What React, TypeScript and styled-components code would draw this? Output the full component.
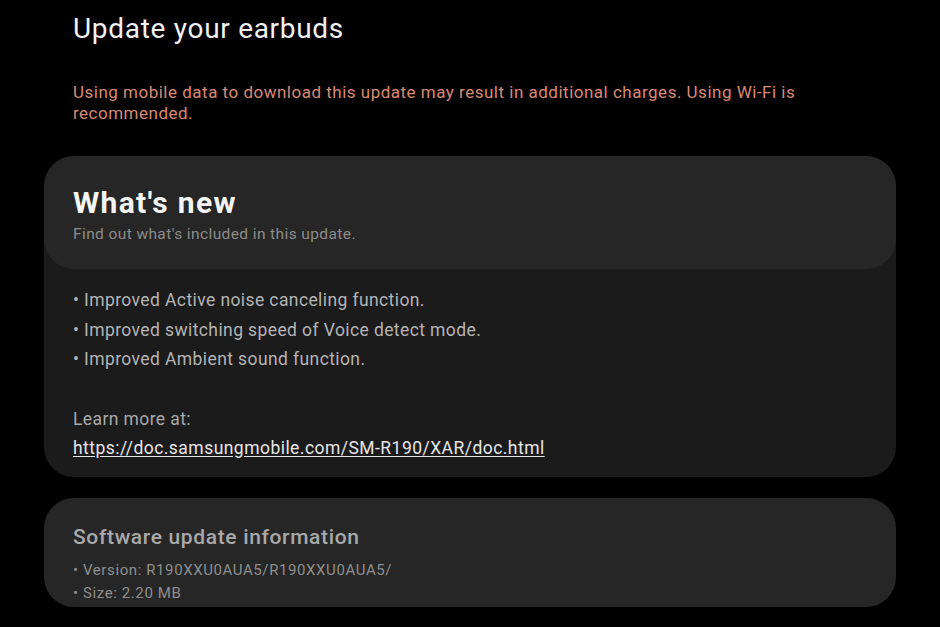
import React from "react";
import styled, { createGlobalStyle } from "styled-components";

const Global = createGlobalStyle`
  html, body { margin: 0; padding: 0; background: #000; }
  body { font-family: Roboto, "Noto Sans", sans-serif; -webkit-font-smoothing: antialiased; }
`;

const Page = styled.div`
  width: 940px;
  height: 627px;
  overflow: hidden;
  background: #000;
  box-sizing: border-box;
  padding: 0 44px;
  display: flex;
  flex-direction: column;
`;

const Title = styled.h1`
  margin: 12px 0 0 29px;
  font-size: 28px;
  line-height: 34px;
  font-weight: 400;
  letter-spacing: 0.7px;
  color: #f2f2f2;
`;

const Warning = styled.p`
  margin: 36px 0 0 29px;
  font-size: 17px;
  line-height: 21px;
  letter-spacing: 0.5px;
  color: #d88a74;
  max-width: 760px;
`;

const Card = styled.section<{ $bg: string }>`
  background: ${(p) => p.$bg};
  border-radius: 30px;
  overflow: hidden;
`;

const NewsCard = styled(Card)`
  margin-top: 32px;
  height: 321px;
`;

const NewsHeader = styled.div`
  background: #262626;
  border-radius: 30px;
  height: 113px;
  box-sizing: border-box;
  padding: 27px 29px 0;
`;

const Heading = styled.h2`
  margin: 0;
  font-size: 30px;
  line-height: 40px;
  font-weight: 700;
  letter-spacing: 1.3px;
  color: #f4f4f4;
`;

const SubText = styled.div`
  margin-top: 2px;
  font-size: 15.5px;
  line-height: 19px;
  letter-spacing: 0.4px;
  color: #8c8c8c;
`;

const NewsBody = styled.div`
  padding: 17px 29px 0;
  color: #b4b4b4;
  font-size: 17.5px;
  letter-spacing: 0.4px;
`;

const Bullet = styled.div`
  line-height: 29.5px;
`;

const LearnMore = styled.div`
  margin-top: 30px;
  line-height: 29px;
  color: #a8a8a8;
`;

const Link = styled.a`
  display: block;
  line-height: 29px;
  letter-spacing: 0.46px;
  color: #e6e6e6;
  text-decoration: underline;
  text-underline-offset: 2px;
`;

const InfoCard = styled(Card)`
  margin-top: 21px;
  height: 109px;
  box-sizing: border-box;
  padding: 24px 29px 0;
`;

const InfoTitle = styled.h3`
  margin: 0;
  font-size: 21px;
  line-height: 30px;
  font-weight: 500;
  letter-spacing: 0.65px;
  color: #a9a9a9;
`;

const InfoLine = styled.div`
  font-size: 15px;
  line-height: 23px;
  letter-spacing: 0.6px;
  color: #8e8e8e;
`;

const InfoLines = styled.div`
  margin-top: 7px;
`;

export default function App() {
  return (
    <>
      <Global />
      <Page>
        <Title>Update your earbuds</Title>
        <Warning>
          Using mobile data to download this update may result in additional charges. Using Wi-Fi is
          recommended.
        </Warning>
        <NewsCard $bg="#1b1b1b">
          <NewsHeader>
            <Heading>What's new</Heading>
            <SubText>Find out what's included in this update.</SubText>
          </NewsHeader>
          <NewsBody>
            <Bullet>• Improved Active noise canceling function.</Bullet>
            <Bullet>• Improved switching speed of Voice detect mode.</Bullet>
            <Bullet>• Improved Ambient sound function.</Bullet>
            <LearnMore>Learn more at:</LearnMore>
            <Link href="#">https://doc.samsungmobile.com/SM-R190/XAR/doc.html</Link>
          </NewsBody>
        </NewsCard>
        <InfoCard $bg="#262626">
          <InfoTitle>Software update information</InfoTitle>
          <InfoLines>
            <InfoLine>• Version: R190XXU0AUA5/R190XXU0AUA5/</InfoLine>
            <InfoLine>• Size: 2.20 MB</InfoLine>
          </InfoLines>
        </InfoCard>
      </Page>
    </>
  );
}
